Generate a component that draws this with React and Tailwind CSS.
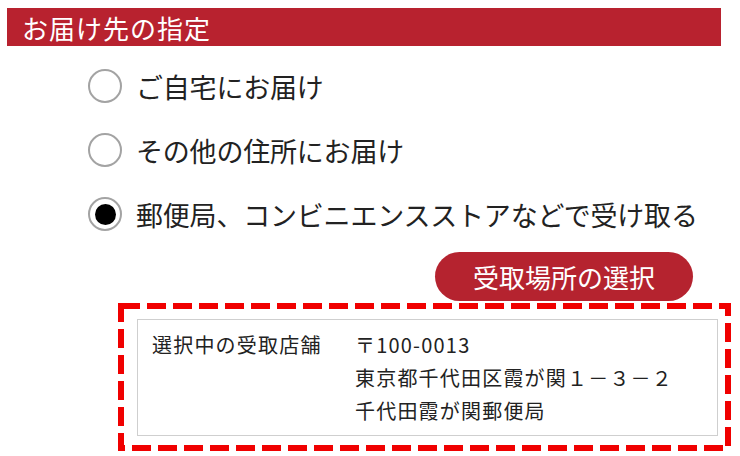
const FONT = { fontFamily: '"Noto Sans CJK JP", "Noto Sans", sans-serif' };

const OPTIONS = [
  { label: 'ご自宅にお届け', checked: false },
  { label: 'その他の住所にお届け', checked: false },
  { label: '郵便局、コンビニエンスストアなどで受け取る', checked: true },
];

function Radio({ checked }) {
  return (
    <span className="flex h-[34px] w-[34px] shrink-0 items-center justify-center rounded-full border-2 border-[#a3a3a3] bg-white">
      {checked && <span className="h-[21px] w-[21px] rounded-full bg-black" />}
    </span>
  );
}

export default function App() {
  return (
    <div className="h-[456px] w-[740px] overflow-hidden bg-white text-[#222]" style={FONT}>
      <div className="mx-[7px] mt-[8px] flex h-[38px] w-[714px] items-center bg-[#b8222f] pl-[15px] text-[26px] tracking-[1px] text-white">
        お届け先の指定
      </div>

      <div className="mt-[8px] flex flex-col pl-[88px]">
        {OPTIONS.map((opt) => (
          <div key={opt.label} className="flex h-[64px] items-center gap-[14px]">
            <Radio checked={opt.checked} />
            <span className="text-[27px] leading-none tracking-[-0.2px]">{opt.label}</span>
          </div>
        ))}
      </div>

      <div className="mt-[6px] flex justify-end pr-[47px]">
        <button className="flex h-[49px] w-[258px] items-center justify-center rounded-full bg-[#b5232f] text-[26px] text-white">
          受取場所の選択
        </button>
      </div>

      <div className="relative ml-[118px] mt-[2px] h-[148px] w-[613px] pl-[19px] pr-[13px] pt-[16px]">
        <svg className="absolute inset-0" width="613" height="148">
          <rect x="3" y="3" width="607" height="142" fill="none" stroke="#f00000" strokeWidth="6" strokeDasharray="19 7" />
        </svg>
        <div className="relative flex h-[117px] border border-[#cfcfcf] bg-white pl-[14px] pt-[8px] text-[20px] leading-[33px] tracking-[1.2px]">
          <div className="w-[203px]">選択中の受取店舗</div>
          <div className="flex flex-col">
            <span>〒100-0013</span>
            <span>東京都千代田区霞が関１－３－２</span>
            <span>千代田霞が関郵便局</span>
          </div>
        </div>
      </div>
    </div>
  );
}
